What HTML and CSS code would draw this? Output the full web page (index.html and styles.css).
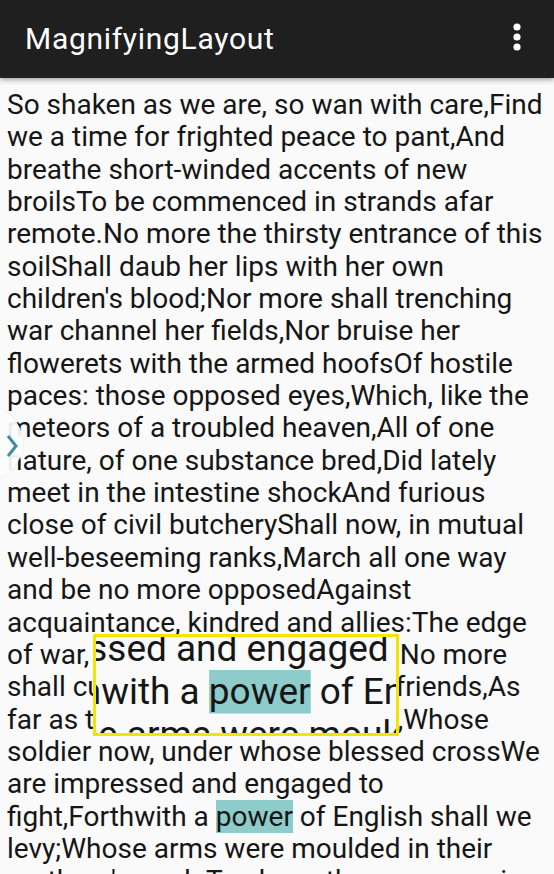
FILE: index.html
```html
<!DOCTYPE html>
<html>
<head>
<meta charset="utf-8">
<link rel="stylesheet" href="styles.css">
</head>
<body>
<div class="app">
  <header class="toolbar">
    <div class="title">MagnifyingLayout</div>
    <div class="menu" aria-label="More options">
      <svg width="10" height="28" viewBox="0 0 10 28"><circle cx="5" cy="4" r="3.6" fill="#fff"/><circle cx="5" cy="14" r="3.6" fill="#fff"/><circle cx="5" cy="24" r="3.6" fill="#fff"/></svg>
    </div>
  </header>
  <main class="content">
    <p class="text">So shaken as we are, so wan with care,Find<br>we a time for frighted peace to pant,And<br>breathe short-winded accents of new<br>broilsTo be commenced in strands afar<br>remote.No more the thirsty entrance of this<br>soilShall daub her lips with her own<br>children's blood;Nor more shall trenching<br>war channel her fields,Nor bruise her<br>flowerets with the armed hoofsOf hostile<br>paces: those opposed eyes,Which, like the<br>meteors of a troubled heaven,All of one<br>nature, of one substance bred,Did lately<br>meet in the intestine shockAnd furious<br>close of civil butcheryShall now, in mutual<br>well-beseeming ranks,March all one way<br>and be no more opposedAgainst<br>acquaintance, kindred and allies:The edge<br>of war, like an ill-sheathed knife,No more<br>shall cut his master. Therefore, friends,As<br>far as to the sepulchre of Christ,Whose<br>soldier now, under whose blessed crossWe<br>are impressed and engaged to<br>fight,Forthwith a <span class="hl">power</span> of English shall we<br>levy;Whose arms were moulded in their<br>mothers' womb;To chase these pagans in<br>those holy fields</p>
  </main>
  <div class="edge-tab">
    <svg class="chev" width="12" height="24" viewBox="0 0 12 24"><polyline points="2,2 10,12 2,22" fill="none" stroke="#3f8e9c" stroke-width="3"/></svg>
  </div>
  <div class="magnifier">
    <div class="lens">
      <div class="content lens-content">
        <p class="text">So shaken as we are, so wan with care,Find<br>we a time for frighted peace to pant,And<br>breathe short-winded accents of new<br>broilsTo be commenced in strands afar<br>remote.No more the thirsty entrance of this<br>soilShall daub her lips with her own<br>children's blood;Nor more shall trenching<br>war channel her fields,Nor bruise her<br>flowerets with the armed hoofsOf hostile<br>paces: those opposed eyes,Which, like the<br>meteors of a troubled heaven,All of one<br>nature, of one substance bred,Did lately<br>meet in the intestine shockAnd furious<br>close of civil butcheryShall now, in mutual<br>well-beseeming ranks,March all one way<br>and be no more opposedAgainst<br>acquaintance, kindred and allies:The edge<br>of war, like an ill-sheathed knife,No more<br>shall cut his master. Therefore, friends,As<br>far as to the sepulchre of Christ,Whose<br>soldier now, under whose blessed crossWe<br>are impressed and engaged to<br>fight,Forthwith a <span class="hl">power</span> of English shall we<br>levy;Whose arms were moulded in their<br>mothers' womb;To chase these pagans in<br>those holy fields</p>
      </div>
    </div>
  </div>
</div>
</body>
</html>
```
FILE: styles.css
```css
html, body {
  margin: 0;
  padding: 0;
  background: #fafafa;
}
.app {
  position: relative;
  width: 554px;
  height: 874px;
  overflow: hidden;
  background: #fafafa;
  font-family: Roboto, "Noto Sans", sans-serif;
}
.toolbar {
  height: 78px;
  background: #1f1f1f;
  display: flex;
  align-items: center;
  justify-content: space-between;
  padding: 0 32px 0 25px;
  box-sizing: border-box;
  box-shadow: 0 2px 5px rgba(0,0,0,0.35);
  position: relative;
  z-index: 2;
}
.title {
  color: #fff;
  font-size: 30px;
  letter-spacing: 0.7px;
  margin-top: -2px;
}
.menu {
  display: flex;
  align-items: center;
  margin-top: -4px;
}
.menu svg { display: block; }
.content {
  padding: 11px 0 0 7px;
  width: 554px;
  box-sizing: border-box;
}
.text {
  margin: 0;
  font-size: 28px;
  line-height: 32.35px;
  color: #161616;
  white-space: nowrap;
}
.hl {
  background: #8ecccb;
}
.edge-tab {
  position: absolute;
  left: -53px;
  top: 405px;
  width: 76px;
  height: 76px;
  border-radius: 50%;
  background: rgba(252,252,252,0.93);
  box-shadow: 0 0 2px rgba(0,0,0,0.12);
  z-index: 3;
}
.chev {
  position: absolute;
  left: 59px;
  top: 29px;
}
.magnifier {
  position: absolute;
  left: 93px;
  top: 634px;
  width: 300px;
  height: 96px;
  border: 3px solid #f4e500;
  background: #fafafa;
  overflow: hidden;
  z-index: 4;
}
.lens {
  position: absolute;
  left: 0;
  top: 0;
  width: 554px;
  padding-top: 78px;
  transform-origin: 0 0;
  transform: translate(-172px, -1023px) scale(1.32);
}
```
